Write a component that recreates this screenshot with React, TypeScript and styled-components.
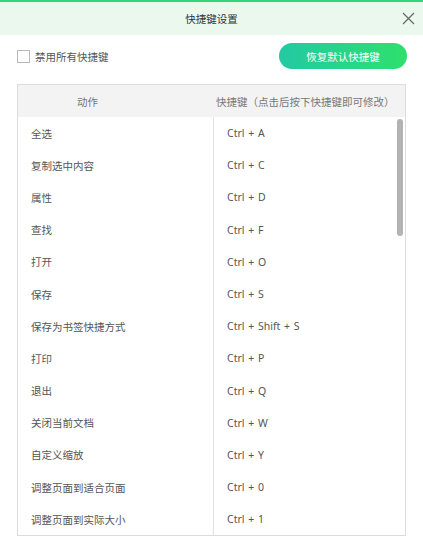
import React from "react";
import styled, { createGlobalStyle } from "styled-components";

const Global = createGlobalStyle`
  html, body { margin: 0; padding: 0; background: #fff; }
  body {
    font-family: "Noto Sans", "Noto Sans CJK SC", sans-serif;
    -webkit-font-smoothing: antialiased;
  }
  * { box-sizing: border-box; }
`;

const Dialog = styled.div`
  width: 423px;
  height: 550px;
  background: #fff;
  border-top: 2px solid #34d67c;
  display: flex;
  flex-direction: column;
`;

const TitleBar = styled.div`
  height: 33px;
  background: #eaf8ee;
  display: flex;
  align-items: center;
  justify-content: center;
  position: relative;
`;

const Title = styled.div`
  font-size: 10.5px;
  color: #333;
`;

const CloseButton = styled.button`
  position: absolute;
  right: 8px;
  top: 10px;
  width: 13px;
  height: 13px;
  padding: 0;
  border: none;
  background: transparent;
  display: flex;
`;

const Toolbar = styled.div`
  display: flex;
  align-items: center;
  justify-content: space-between;
  padding: 0 16px 0 17px;
  height: 26px;
  margin: 8px 0 15px;
`;

const CheckLabel = styled.label`
  display: flex;
  align-items: center;
  gap: 5px;
  font-size: 10.5px;
  color: #555;
`;

const Box = styled.span`
  width: 13px;
  height: 13px;
  border: 1px solid #b8b8b8;
  background: #fff;
`;

const ResetButton = styled.button`
  width: 128px;
  height: 26px;
  border: none;
  border-radius: 13px;
  background: linear-gradient(90deg, #23c9a3 0%, #2ee06d 100%);
  color: #fff;
  font-family: inherit;
  font-size: 10.5px;
  padding: 0;
`;

const Table = styled.div`
  margin: 0 17px;
  width: 389px;
  border: 1px solid #dcdcdc;
  position: relative;
`;

const HeadRow = styled.div`
  display: grid;
  grid-template-columns: 195px 1fr;
  height: 32px;
  background: #f3f3f3;
  align-items: center;
`;

const HeadCell = styled.div<{ $pad: number }>`
  padding-left: ${(p) => p.$pad}px;
  font-size: 10.5px;
  color: #777;
  white-space: nowrap;
`;

const Body = styled.div`
  display: grid;
  grid-template-columns: 195px 1fr;
  background: #fff;
`;

const Cell = styled.div<{ $right?: boolean }>`
  height: 32.2px;
  display: flex;
  align-items: center;
  padding-left: 13px;
  font-size: 10.5px;
  color: #555;
  word-spacing: ${(p) => (p.$right ? "1px" : "0")};
  border-left: ${(p) => (p.$right ? "1px solid #e2e2e2" : "none")};
  white-space: nowrap;
`;

const Thumb = styled.div`
  position: absolute;
  right: 2px;
  top: 34px;
  width: 6px;
  height: 117px;
  border-radius: 3px;
  background: #b3b3b3;
`;

const rows: [string, string][] = [
  ["全选", "Ctrl + A"],
  ["复制选中内容", "Ctrl + C"],
  ["属性", "Ctrl + D"],
  ["查找", "Ctrl + F"],
  ["打开", "Ctrl + O"],
  ["保存", "Ctrl + S"],
  ["保存为书签快捷方式", "Ctrl + Shift + S"],
  ["打印", "Ctrl + P"],
  ["退出", "Ctrl + Q"],
  ["关闭当前文档", "Ctrl + W"],
  ["自定义缩放", "Ctrl + Y"],
  ["调整页面到适合页面", "Ctrl + 0"],
  ["调整页面到实际大小", "Ctrl + 1"],
];

export default function App() {
  return (
    <>
      <Global />
      <Dialog>
        <TitleBar>
          <Title>快捷键设置</Title>
          <CloseButton aria-label="关闭">
            <svg width="13" height="13" viewBox="0 0 13 13">
              <path d="M1 1 L12 12 M12 1 L1 12" stroke="#666" strokeWidth="1.2" fill="none" />
            </svg>
          </CloseButton>
        </TitleBar>
        <Toolbar>
          <CheckLabel>
            <Box />
            禁用所有快捷键
          </CheckLabel>
          <ResetButton>恢复默认快捷键</ResetButton>
        </Toolbar>
        <Table>
          <HeadRow>
            <HeadCell $pad={59}>动作</HeadCell>
            <HeadCell $pad={3}>快捷键（点击后按下快捷键即可修改）</HeadCell>
          </HeadRow>
          <Body>
            {rows.map(([a, k]) => (
              <React.Fragment key={a}>
                <Cell>{a}</Cell>
                <Cell $right>{k}</Cell>
              </React.Fragment>
            ))}
          </Body>
          <Thumb />
        </Table>
      </Dialog>
    </>
  );
}
